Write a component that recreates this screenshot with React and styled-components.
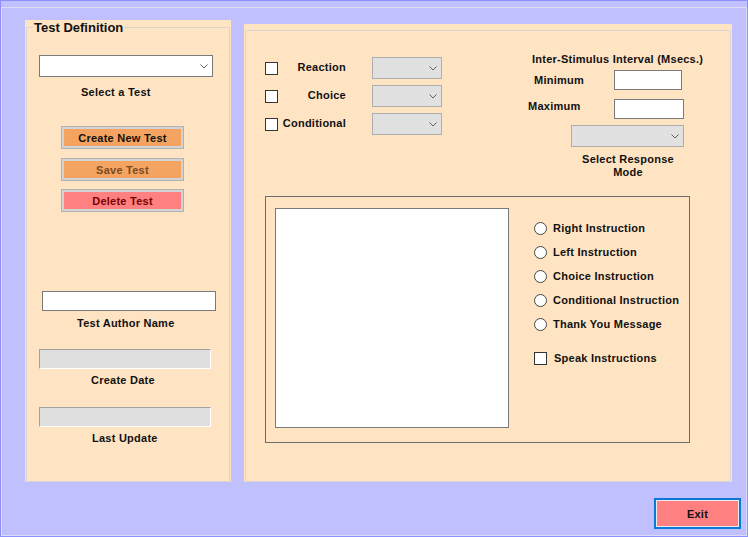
import React from "react";
import styled, { createGlobalStyle } from "styled-components";

const GlobalStyle = createGlobalStyle`
  html, body {
    margin: 0;
    padding: 0;
  }
  body {
    font-family: "Liberation Sans", Arial, sans-serif;
    font-size: 11px;
    font-weight: bold;
    letter-spacing: 0.25px;
    color: #111;
  }
  * {
    box-sizing: border-box;
  }
`;

const Window = styled.div`
  width: 748px;
  height: 537px;
  background: #c0c0ff;
  border: 1px solid #8e8eff;
  display: flex;
  flex-direction: column;
`;

const Frame = styled.div`
  margin-top: 6px;
  flex: 1;
  border: 1px solid #dcdcf4;
  display: flex;
  flex-direction: column;
`;

const PanelsRow = styled.div`
  display: flex;
  align-items: flex-start;
  padding-left: 23px;
`;

/* bisque panel that carries a group box a pixel inside its edge */
const Panel = styled.div`
  background: #ffe4c4;
  width: ${(p) => p.$w}px;
  height: ${(p) => p.$h}px;
  margin-top: ${(p) => p.$mt}px;
  margin-left: ${(p) => p.$ml || 0}px;
  padding: ${(p) => p.$pt || 0}px 1px 0 1px;
`;

const GroupSet = styled.fieldset`
  margin: 0;
  padding: 0;
  min-width: 0;
  height: 100%;
  border: 1px solid #d9d6d2;
`;

const Legend = styled.legend`
  margin-left: 6px;
  padding: 1px 1px 0;
  font-size: 13px;
  line-height: 14px;
  letter-spacing: 0;
`;

const Column = styled.div`
  display: flex;
  flex-direction: column;
  align-items: flex-start;
`;

const Spaced = styled.div`
  margin-top: ${(p) => p.$mt || 0}px;
  margin-left: ${(p) => p.$ml || 0}px;
`;

const Combo = styled.div`
  width: ${(p) => p.$w}px;
  height: 22px;
  margin-top: ${(p) => p.$mt || 0}px;
  margin-left: ${(p) => p.$ml || 0}px;
  background: ${(p) => (p.$white ? "#ffffff" : "#e1e1e1")};
  border: 1px solid ${(p) => (p.$white ? "#7a7a7a" : "#adadad")};
  display: flex;
  align-items: center;
  justify-content: flex-end;
  padding-right: 4px;
  flex-shrink: 0;
`;

const Caption = styled.div`
  margin-top: ${(p) => p.$mt || 0}px;
  margin-left: ${(p) => p.$ml || 0}px;
  width: ${(p) => (p.$w ? `${p.$w}px` : "auto")};
  text-align: ${(p) => (p.$center ? "center" : "left")};
  line-height: 13px;
  white-space: nowrap;
`;

const buttonTone = {
  create: { bg: "#f4a460", fg: "#111" },
  save: { bg: "#f4a460", fg: "#7a4a22" },
  remove: { bg: "#ff8080", fg: "#7a0000" },
};

const ActionButton = styled.button`
  width: 123px;
  height: 23px;
  margin-top: ${(p) => p.$mt}px;
  margin-left: 34px;
  padding: 0;
  border: 1px solid #b2b2b2;
  box-shadow: inset 0 0 0 2px #d3d3d3;
  background: ${(p) => buttonTone[p.$tone].bg};
  color: ${(p) => buttonTone[p.$tone].fg};
  font: bold 11px "Liberation Sans", Arial, sans-serif;
  letter-spacing: 0.25px;
`;

const TextBox = styled.input`
  width: ${(p) => p.$w}px;
  height: 20px;
  margin: ${(p) => p.$mt || 0}px 0 0 ${(p) => p.$ml || 0}px;
  padding: 0 2px;
  background: #fff;
  border: 1px solid #7a7a7a;
  outline: none;
  flex-shrink: 0;
`;

const ReadOnlyBox = styled.div`
  width: 172px;
  height: 20px;
  margin-top: ${(p) => p.$mt}px;
  margin-left: 12px;
  background: #dfdfdf;
  border-top: 1px solid #a0a0a0;
  border-left: 1px solid #a0a0a0;
  border-right: 1px solid #fff;
  border-bottom: 1px solid #fff;
`;

const GroupBox = styled.div`
  height: 100%;
  border: 1px solid #d9d6d2;
  display: flex;
  flex-direction: column;
  align-items: flex-start;
`;

const TopSection = styled.div`
  display: flex;
  align-items: flex-start;
`;

const TestTypes = styled.div`
  margin: 26px 0 0 19px;
  display: grid;
  row-gap: 6px;
`;

const TypeRow = styled.div`
  display: flex;
  align-items: center;
  height: 22px;
`;

const CheckBox = styled.span`
  display: block;
  width: 13px;
  height: 13px;
  background: #fff;
  border: 1px solid #333;
  flex-shrink: 0;
`;

const Radio = styled.span`
  display: block;
  width: 13px;
  height: 13px;
  background: #fff;
  border: 1px solid #444;
  border-radius: 50%;
  flex-shrink: 0;
`;

const TypeLabel = styled.span`
  width: 68px;
  text-align: right;
  line-height: 13px;
  margin-top: -1px;
`;

const IntervalRow = styled.div`
  display: flex;
  align-items: flex-start;
  margin-top: ${(p) => p.$mt}px;
`;

const IntervalLabel = styled.span`
  width: ${(p) => p.$w}px;
  margin-left: ${(p) => p.$ml}px;
  margin-top: ${(p) => p.$mt}px;
  line-height: 13px;
`;

const InstructionBox = styled.div`
  width: 425px;
  height: 247px;
  margin: 17px 0 0 19px;
  border: 1px solid #6d6d6d;
  display: flex;
  align-items: flex-start;
`;

const Memo = styled.textarea`
  width: 234px;
  height: 220px;
  margin: 11px 0 0 9px;
  padding: 2px;
  background: #fff;
  border: 1px solid #7a7a7a;
  resize: none;
  outline: none;
`;

const Options = styled.div`
  margin: 25px 0 0 25px;
  display: flex;
  flex-direction: column;
  gap: 11px;
`;

const OptionRow = styled.div`
  display: flex;
  align-items: center;
  height: 13px;
  gap: ${(p) => p.$gap || 6}px;
  margin-top: ${(p) => p.$mt || 0}px;
  line-height: 13px;
  white-space: nowrap;
`;

const Footer = styled.div`
  display: flex;
  justify-content: flex-end;
  margin-top: 16px;
  padding-right: 5px;
`;

const ExitButton = styled.button`
  width: 87px;
  height: 31px;
  padding: 0;
  background: #ff8080;
  border: 2px solid #0a78d7;
  box-shadow: inset 0 0 0 1px #ececec;
  color: #111;
  font: bold 11px "Liberation Sans", Arial, sans-serif;
  letter-spacing: 0.25px;
`;

const Chevron = () => (
  <svg width="8" height="5" viewBox="0 0 8 5">
    <path d="M0.5 0.5 L4 4 L7.5 0.5" fill="none" stroke="#606060" strokeWidth="1" />
  </svg>
);

const testTypes = ["Reaction", "Choice", "Conditional"];
const instructions = [
  "Right Instruction",
  "Left Instruction",
  "Choice Instruction",
  "Conditional Instruction",
  "Thank You Message",
];

export default function App() {
  return (
    <>
      <GlobalStyle />
      <Window>
        <Frame>
          <PanelsRow>
            <Panel $w={206} $h={462} $mt={12}>
              <GroupSet>
                <Legend>Test Definition</Legend>
                <Column>
                  <Combo $white $w={174} $mt={20} $ml={12}>
                    <Chevron />
                  </Combo>
                  <Caption $mt={9} $ml={54}>Select a Test</Caption>
                  <ActionButton $tone="create" $mt={27}>Create New Test</ActionButton>
                  <ActionButton $tone="save" $mt={9}>Save Test</ActionButton>
                  <ActionButton $tone="remove" $mt={8}>Delete Test</ActionButton>
                  <TextBox $w={174} $mt={79} $ml={15} />
                  <Caption $mt={6} $ml={50}>Test Author Name</Caption>
                  <ReadOnlyBox $mt={19} />
                  <Caption $mt={5} $ml={64}>Create Date</Caption>
                  <ReadOnlyBox $mt={20} />
                  <Caption $mt={5} $ml={65}>Last Update</Caption>
                </Column>
              </GroupSet>
            </Panel>

            <Panel $w={488} $h={458} $mt={16} $ml={13} $pt={6}>
              <GroupBox>
                <TopSection>
                  <TestTypes>
                    {testTypes.map((t) => (
                      <TypeRow key={t}>
                        <CheckBox />
                        <TypeLabel>{t}</TypeLabel>
                        <Combo $w={70} $ml={26}>
                          <Chevron />
                        </Combo>
                      </TypeRow>
                    ))}
                  </TestTypes>
                  <Spaced $mt={22} $ml={86}>
                    <Column>
                      <Caption $ml={4}>Inter-Stimulus Interval (Msecs.)</Caption>
                      <IntervalRow $mt={4}>
                        <IntervalLabel $w={80} $ml={6} $mt={4}>Minimum</IntervalLabel>
                        <TextBox $w={68} />
                      </IntervalRow>
                      <IntervalRow $mt={9}>
                        <IntervalLabel $w={86} $ml={0} $mt={1}>Maximum</IntervalLabel>
                        <TextBox $w={70} />
                      </IntervalRow>
                      <Combo $w={113} $mt={6} $ml={43}>
                        <Chevron />
                      </Combo>
                      <Caption $mt={6} $ml={40} $w={120} $center>
                        Select Response
                        <br />
                        Mode
                      </Caption>
                    </Column>
                  </Spaced>
                </TopSection>

                <InstructionBox>
                  <Memo />
                  <Options>
                    {instructions.map((label) => (
                      <OptionRow key={label}>
                        <Radio />
                        <span>{label}</span>
                      </OptionRow>
                    ))}
                    <OptionRow $mt={10} $gap={7}>
                      <CheckBox />
                      <span>Speak Instructions</span>
                    </OptionRow>
                  </Options>
                </InstructionBox>
              </GroupBox>
            </Panel>
          </PanelsRow>

          <Footer>
            <ExitButton>Exit</ExitButton>
          </Footer>
        </Frame>
      </Window>
    </>
  );
}
